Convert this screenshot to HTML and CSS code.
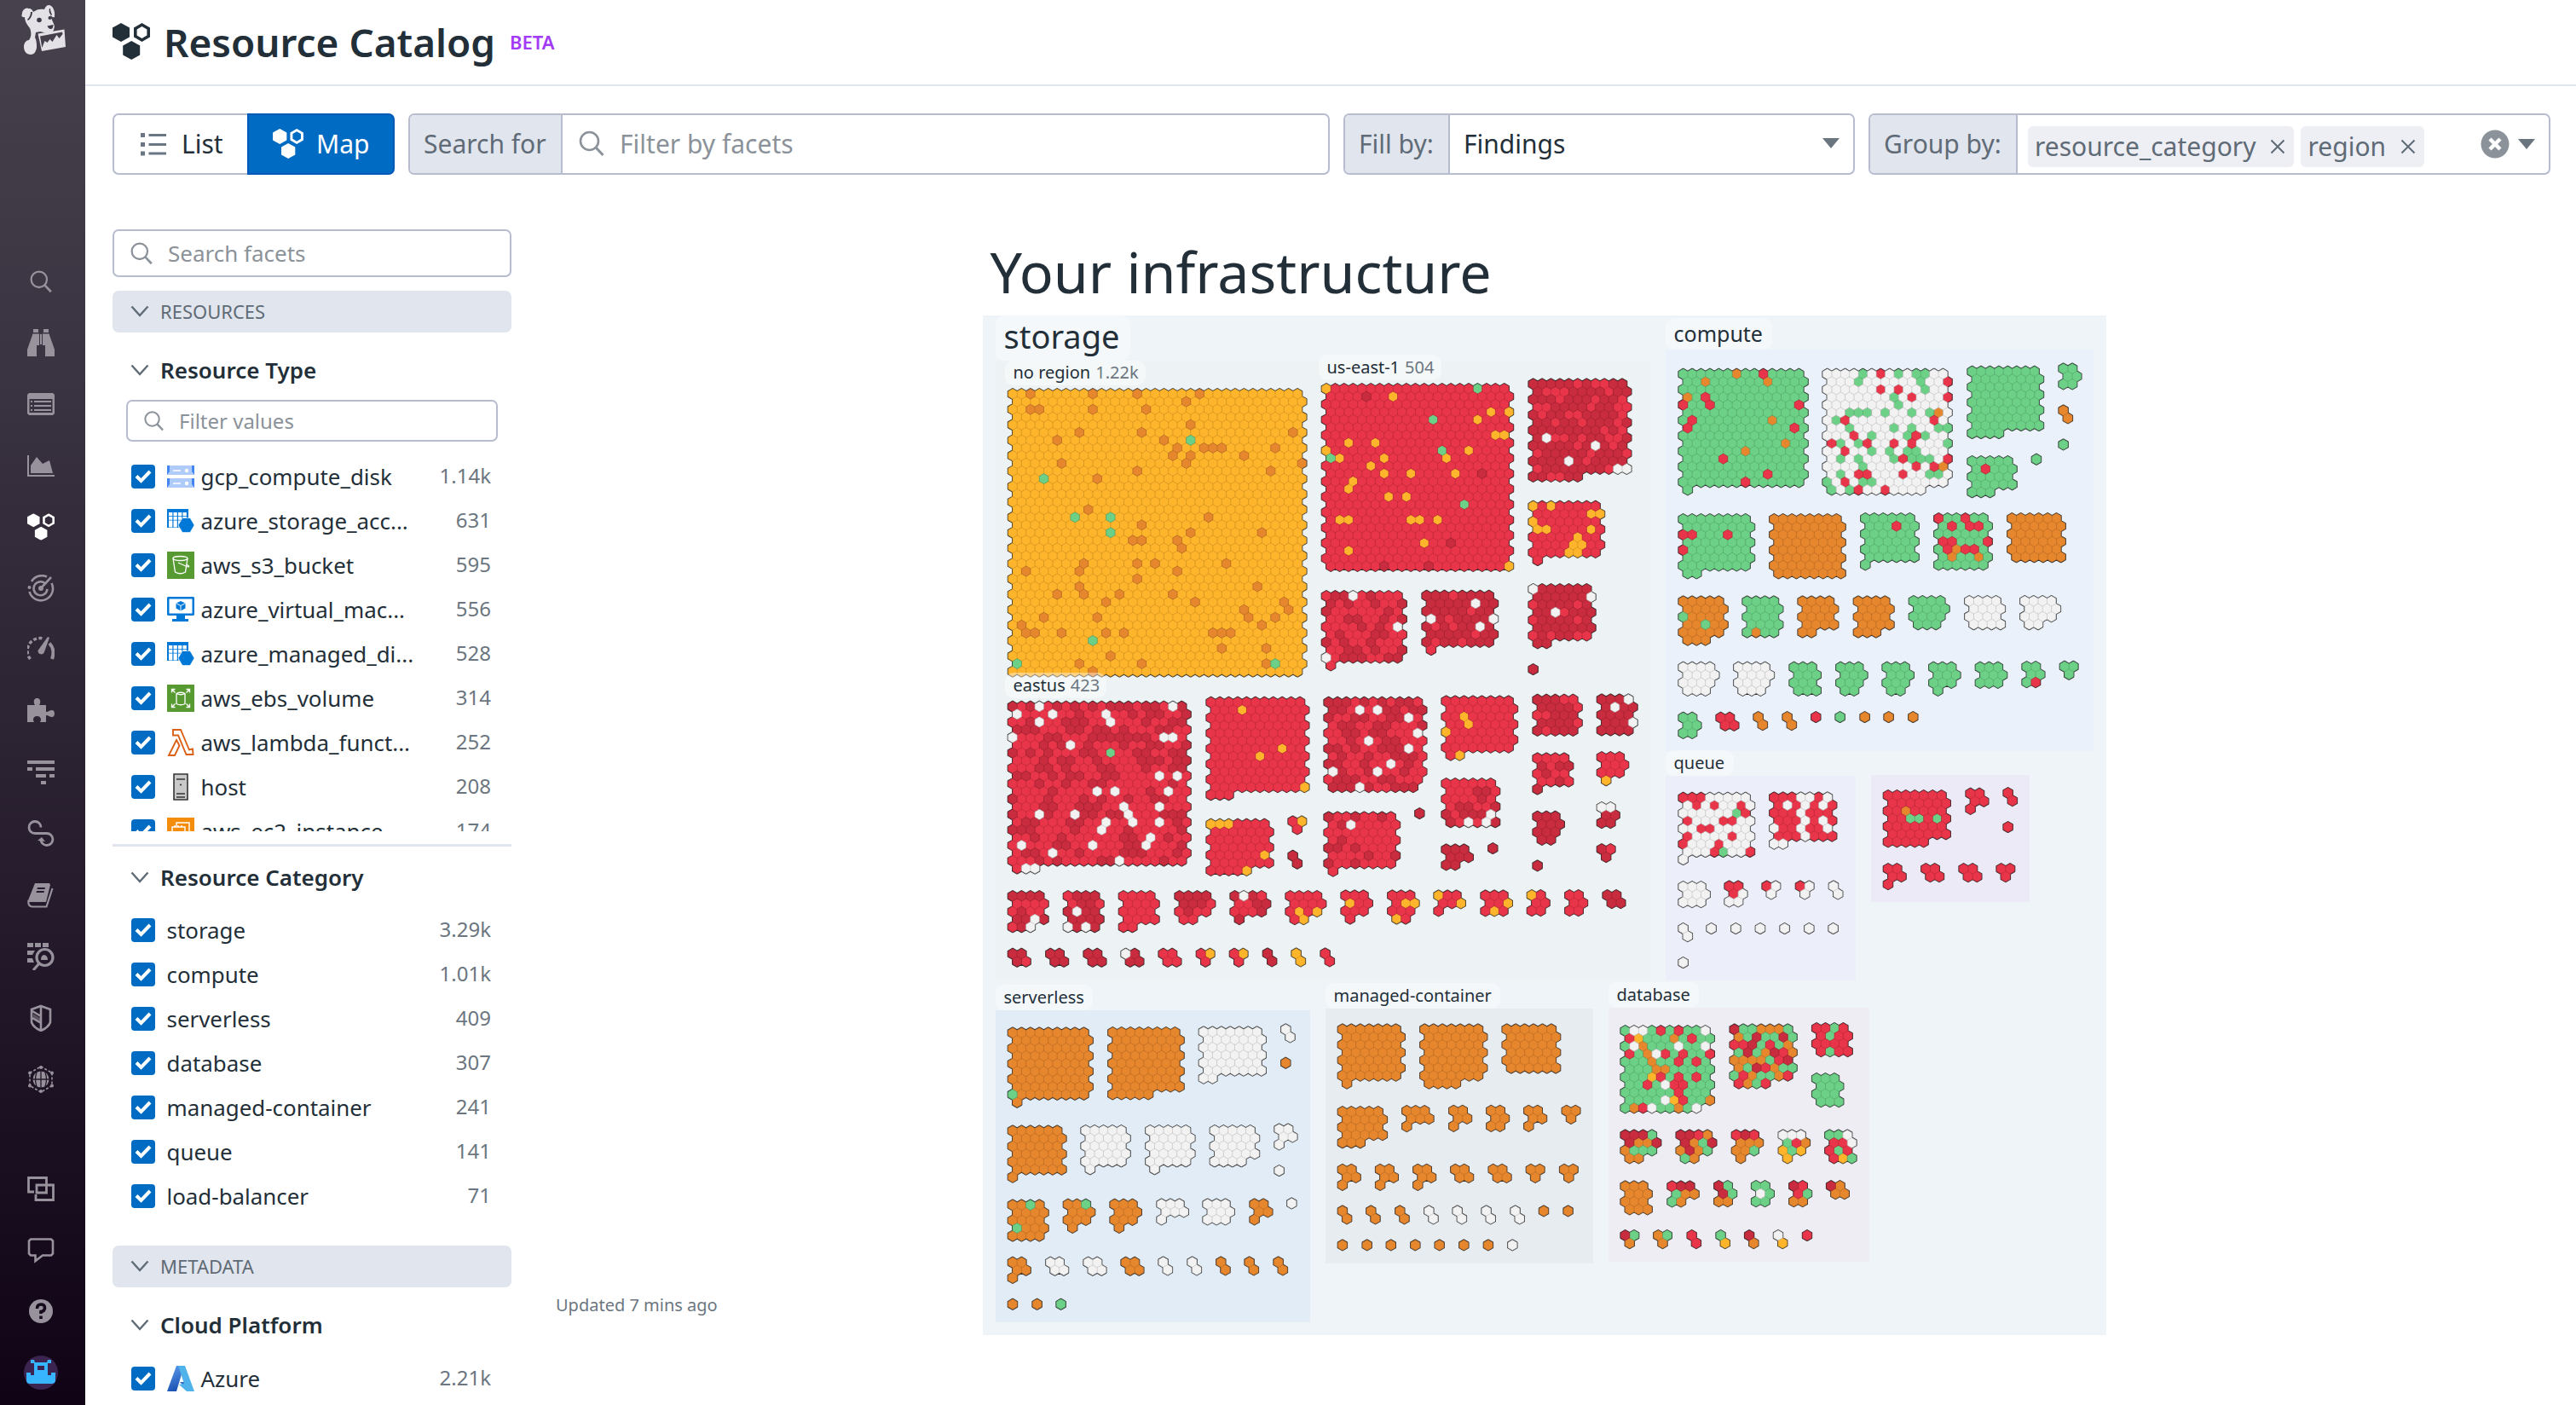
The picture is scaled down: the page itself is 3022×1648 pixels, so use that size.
FILE: index.html
```html
<!DOCTYPE html>
<html lang="en">
<head>
<meta charset="utf-8">
<title>Resource Catalog</title>
<link rel="stylesheet" href="styles.css">
</head>
<body>
<svg class="sprite" aria-hidden="true">
  <symbol id="i-hexes" viewBox="0 0 44 43">
    <path d="M10 0l10 5.5v11L10 22 0 16.500v-11zM22.200 21l10 5.500v11l-10 5.500-10-5.500v-11z"/>
    <path fill-rule="evenodd" d="M34.500 0L44 5.500v11L34.500 22 25 16.500v-11zM34.500 4l-5.900 3.500v7l5.900 3.500 5.900-3.500v-7z"/>
  </symbol>
  <symbol id="i-search" viewBox="0 0 32 32"><g fill="none" stroke="currentColor" stroke-width="2.600"><circle cx="13.500" cy="13.500" r="10.500"/><path d="M21 21l8.500 9" stroke-width="3"/></g></symbol>
  <symbol id="i-chevron" viewBox="0 0 22 14"><path d="M1.500 1.500L11 12 20.500 1.500" fill="none" stroke="currentColor" stroke-width="2.400"/></symbol>
  <symbol id="i-x" viewBox="0 0 18 18"><path d="M1.500 1.500l15 15M16.500 1.500l-15 15" fill="none" stroke="currentColor" stroke-width="2"/></symbol>
  <symbol id="i-check" viewBox="0 0 20 16"><path d="M2 7.500l5.500 5.500L18 2" fill="none" stroke="#fff" stroke-width="4"/></symbol>
  <symbol id="i-azuretable" viewBox="0 0 32 32">
    <path fill="#0078d7" d="M0 2h25v22H0z"/><path stroke="#fff" stroke-width="4" stroke-dasharray="4.300 1.200" d="M2 8h21M2 12.800h21M2 17.600h21M2 21.500h12"/>
    <path fill="#0078d7" stroke="#fff" stroke-width=".6" d="M18 12.500h9l5 8.500-5 8.500h-9L13 21z"/>
  </symbol>
</svg>

<nav class="rail">
  <svg class="rail-logo" viewBox="0 0 52 58">
    <path fill="#e3e1e6" d="M1 12C0 6 5 2 9 4c3 0 4 2 5 4 4-3 8-4 13-3 1-3 3-5 5-5 5 0 8 7 7 14-2 1-4-1-5-3 1 6 4 9 5 14l-1 4c-1 3-4 5-7 4-3-1-6-1-9-2l-5 1-1 6c2 3 2 8 2 12-1 5-3 8-7 8-5 0-8-4-8-9s3-8 6-8c3-4 3-9 1-14-3-4-6-8-6-13-2 1-4-1-4-3z"/>
    <path fill="#e3e1e6" fill-rule="evenodd" d="M19.500 33.500l31-5 1.500 20.500-28 5zM22 36.500l2.300 13.500 3.200-8 3 2 3-4 3 3 5-8 3 4 4-5-.5-2.500z"/>
    <path fill="#3f3846" d="M13 8c0 4-2 8-5 10l-1-1c3-3 4-6 4-9zM33 4c-1 3 0 6 2 8l1-1c-1-2-2-4-2-7z"/>
    <circle cx="21" cy="17.500" r="2.800" fill="#3f3846"/><circle cx="33.500" cy="15" r="2" fill="#3f3846"/>
    <path fill="#3f3846" d="M30.500 24.500l7-1.500c0 3-1 5-3 5s-3-1.500-4-3.500z"/>
  </svg>
  <div class="rail-main">
    <span><svg viewBox="0 0 32 32"><use href="#i-search" x="2" y="2" width="28" height="28"/></svg></span>
    <span><svg viewBox="0 0 32 32"><path d="M7 0h6v4H7zM19 0h6v4h-6zM6.500 5.500H14V19h-3v13H0V24zM18 5.500h7.500L32 24v8H21V19h-3zM15 6h2v12h-2z"/></svg></span>
    <span><svg viewBox="0 0 32 32"><path fill-rule="evenodd" d="M2 3h28l2 2v22l-2 2H2l-2-2V5zM2.500 10v16h27V10zM4 12h2v2H4zm4 0h20v2H8zm-4 5h2v2H4zm4 0h20v2H8zm-4 5h2v2H4zm4 0h20v2H8z"/></svg></span>
    <span><svg viewBox="0 0 32 32"><path d="M0 4h2v23h30v2H0zM4 25V16L11 6l7 8 8-4 4 15z"/></svg></span>
    <span class="on"><svg viewBox="0 0 44 43"><use href="#i-hexes"/></svg></span>
    <span><svg viewBox="0 0 32 32"><g fill="none" stroke="currentColor" stroke-width="2.600"><path d="M5 8a14 14 0 0 1 18-5.500M28.500 10A14 14 0 1 1 2.500 20M22 11.500A8 8 0 1 0 23.500 17M15 17L28 3" /></g><circle cx="2.500" cy="15" r="2"/><circle cx="16" cy="16" r="3"/></svg></span>
    <span><svg viewBox="0 0 32 32"><path d="M3.500 27A15 15 0 0 1 19 3" fill="none" stroke="currentColor" stroke-width="3.400" stroke-dasharray="4 2.400"/><path d="M26 8.500Q33 16 29 27" fill="none" stroke="currentColor" stroke-width="4"/><path d="M24 1l2 1-6.500 18a4 4 0 0 1-7-3z"/></svg></span>
    <span><svg viewBox="0 0 32 32"><path d="M0 9h9c-2-3-2-8 2.500-8S16 6 14 9h8v8c3 0 4-2 7-2 4 0 4 8 0 8-3 0-4-2-7-2v8h-7c2-3 1-7-3.500-7S6 26 8 29H0z"/></svg></span>
    <span><svg viewBox="0 0 32 32"><path d="M0 2h32v4H0zM0 10h6v4H0zM10 10h22v4H10zM10 18h12v4H10zM26 18h6v4h-6zM16 26h6v4h-6z"/></svg></span>
    <span><svg viewBox="0 0 32 32"><g fill="none" stroke="currentColor" stroke-width="2.800"><path d="M16 8.500A7 7 0 1 0 9 15.500h14a7 7 0 1 1-7 8"/></g><path d="M12 24l5-4 4 5z"/></svg></span>
    <span><svg viewBox="0 0 32 32"><path fill-rule="evenodd" d="M9 2h17l1 2-5 20H2L1 22zM12 7l-.5 2h9l.5-2zm-1 4l-.5 2h9l.5-2z"/><path fill="none" stroke="currentColor" stroke-width="2.200" d="M1.500 22q-1 7 4 7.500h17L29.500 8"/></svg></span>
    <span><svg viewBox="0 0 32 32"><path d="M0 0h7v5H0zM9 0h7v5H9zM18 0h7v5h-7zM0 9h9l-3 5H0zM0 18h6l2 5H0z"/><g fill="none" stroke="currentColor" stroke-width="3.200"><circle cx="20.500" cy="17" r="9.500"/><path d="M14 24l-7 8"/></g><path d="M16 20q0-6 4-6 4 1 4 6z"/></svg></span>
    <span><svg viewBox="0 0 32 32"><path fill="none" stroke="currentColor" stroke-width="2.600" d="M16 2l11 4v15q-2 6-11 10Q7 27 5 21V6zM16 2v28M6 8l10 6M6 16l10 6"/><path d="M7 11l8 5v5l-8-6z" opacity=".5"/></svg></span>
    <span><svg viewBox="0 0 32 32"><circle cx="16" cy="16" r="9.500"/><path fill="none" stroke="#241a2b" stroke-width="1.300" d="M16 6v20M6 16h20M11 8q-3 8 0 16M21 8q3 8 0 16"/><path fill="none" stroke="currentColor" stroke-width="1.600" stroke-dasharray="3 2" d="M16 1l13 7.500v15L16 31 3 23.500v-15z"/><g><circle cx="16" cy="2" r="2"/><circle cx="29" cy="8.500" r="2"/><circle cx="3" cy="8.500" r="2"/><circle cx="29" cy="23.500" r="2"/><circle cx="3" cy="23.500" r="2"/><circle cx="16" cy="30" r="2"/></g></svg></span>
  </div>
  <div class="rail-foot">
    <span><svg viewBox="0 0 32 32"><g fill="none" stroke="currentColor" stroke-width="2.800"><path d="M8 20H1.500V3.500h21V21H11V12h16"/><path d="M10 23v6.500h20.500V12H26"/></g></svg></span>
    <span><svg viewBox="0 0 32 32"><path fill="none" stroke="currentColor" stroke-width="2.600" d="M4 3.500h24l2 2v15l-2 2H18L9.500 29v-6.500H4l-2-2v-15z"/></svg></span>
    <span><svg viewBox="0 0 32 32"><circle cx="16" cy="16" r="14"/><path fill="none" stroke="#160a1c" stroke-width="3.600" d="M11.500 13q0-5 4.500-5t4.500 4-4.500 4.500V19M16 21.500V25"/></svg></span>
    <span><svg class="avatar" viewBox="0 0 40 40"><circle cx="20" cy="20" r="20" fill="#3b2550"/><path fill="#37b6ff" fill-rule="evenodd" d="M8 5h4l1 3h14l1-3h4v4h-4v14h4v-3h5v10q-1 3-4 3H7q-4 0-4-4v-9h5v3h4V9H8zM16 12v5h8v-5z"/></svg></span>
  </div>
</nav>

<main class="page">
  <header class="head">
    <svg class="head-icon" viewBox="0 0 44 43"><use href="#i-hexes"/></svg>
    <h1>Resource Catalog</h1>
    <span class="beta">BETA</span>
  </header>

  <section class="toolbar">
    <div class="switch">
      <div class="switch-item list">
        <svg width="30" height="28" viewBox="0 0 30 28"><path fill="#6b7684" d="M0 1h5v5H0zM9.500 2H30v3H9.500zM0 12h5v5H0zM9.500 13H30v3H9.500zM0 22.500h5v5H0zM9.500 23.500H30v3H9.500z"/></svg>List
      </div>
      <div class="switch-item map"><svg width="36" height="35" viewBox="0 0 44 43"><use href="#i-hexes"/></svg>Map</div>
    </div>
    <div class="field search-for">
      <span class="field-label">Search for</span>
      <div class="field-body ghost"><svg width="32" height="32"><use href="#i-search"/></svg>Filter by facets</div>
    </div>
    <div class="field fill-by">
      <span class="field-label">Fill by:</span>
      <div class="field-body dark">Findings<i class="caret"></i></div>
    </div>
    <div class="field group-by">
      <span class="field-label">Group by:</span>
      <div class="field-body tags">
        <span class="tag">resource_category<svg width="18" height="18"><use href="#i-x"/></svg></span>
        <span class="tag">region<svg width="18" height="18"><use href="#i-x"/></svg></span>
        <svg class="clear" width="34" height="34" viewBox="0 0 34 34"><circle cx="17" cy="17" r="16.500" fill="#8b9299"/><path d="M11 11l12 12M23 11L11 23" stroke="#fff" stroke-width="4.500"/></svg>
        <i class="caret"></i>
      </div>
    </div>
  </section>

  <section class="body">
    <aside class="facets">
      <div class="input big"><svg width="28" height="28"><use href="#i-search"/></svg>Search facets</div>
      <div class="band first"><svg width="22" height="14"><use href="#i-chevron"/></svg>RESOURCES</div>

      <h2 class="type"><svg width="22" height="14"><use href="#i-chevron"/></svg>Resource Type</h2>
      <div class="input small"><svg width="25" height="25"><use href="#i-search"/></svg>Filter values</div>
      <ul class="rows clipped">
        <li><b><svg><use href="#i-check"/></svg></b><svg class="ico" viewBox="0 0 32 32"><path fill="#aecbfa" d="M0 3h32v11H0zM0 18h32v11H0z"/><path fill="#4285f4" d="M0 3v11l3-4V3zM32 3v11l-3-4V3zM0 18v11l3-4v-7zM32 18v11l-3-4v-7z"/><path stroke="#fff" stroke-width="1.600" d="M7 9h9M7 24h9"/><circle cx="23" cy="9" r="2.200" fill="#fff"/><circle cx="23" cy="24" r="2.200" fill="#fff"/></svg><span>gcp_compute_disk</span><em>1.14k</em></li>
        <li><b><svg><use href="#i-check"/></svg></b><svg class="ico"><use href="#i-azuretable"/></svg><span>azure_storage_acc...</span><em>631</em></li>
        <li><b><svg><use href="#i-check"/></svg></b><svg class="ico" viewBox="0 0 32 32"><path fill="#569a31" d="M0 0h32v32H0z"/><g fill="none" stroke="#fff" stroke-width="1.300"><ellipse cx="15.500" cy="8" rx="8.500" ry="2.500"/><path d="M7 8l2.500 16q6 3.500 12 0L24 8M13 13l10 4.500q3 1 2.500-.5l-2-1.500"/></g></svg><span>aws_s3_bucket</span><em>595</em></li>
        <li><b><svg><use href="#i-check"/></svg></b><svg class="ico" viewBox="0 0 32 32"><path fill="#0078d7" fill-rule="evenodd" d="M1 1h30l1 1v20l-1 1H21v4h4v3H6v-3h5v-4H1l-1-1V2zM2.500 3.500v17h27v-17z"/><path fill="#0078d7" d="M16 6l5.500 2.500v6L16 17.500l-5.500-3v-6z"/><path stroke="#fff" fill="none" d="M10.500 8.500L16 11.500l5.500-3M16 11.500v6"/></svg><span>azure_virtual_mac...</span><em>556</em></li>
        <li><b><svg><use href="#i-check"/></svg></b><svg class="ico"><use href="#i-azuretable"/></svg><span>azure_managed_di...</span><em>528</em></li>
        <li><b><svg><use href="#i-check"/></svg></b><svg class="ico" viewBox="0 0 32 32"><path fill="#569a31" d="M0 0h32v32H0z"/><g fill="none" stroke="#fff" stroke-width="1.300"><path d="M11 10.500q5-2.500 10 0v12q-5 2.500-10 0zM11 10.500q5 2.500 10 0M5.500 9.500V5.500h4M5.500 5.500l4 4M26.500 9.500V5.500h-4M26.500 5.500l-4 4M5.500 22.500v4h4M5.500 26.500l4-4M26.500 22.500v4h-4M26.500 26.500l-4-4"/></g></svg><span>aws_ebs_volume</span><em>314</em></li>
        <li><b><svg><use href="#i-check"/></svg></b><svg class="ico" viewBox="0 0 32 32"><path fill="none" stroke="#dc6014" stroke-width="1.900" d="M7 1h9l10 23.500 4-1 .5 6.500h-8L13 7.500H7zM11 13l3.500 6.500L9 31H2z"/></svg><span>aws_lambda_funct...</span><em>252</em></li>
        <li><b><svg><use href="#i-check"/></svg></b><svg class="ico" viewBox="0 0 32 32"><path fill="#c8c8c8" stroke="#333" stroke-width="1.600" d="M8 1h16v30H8z"/><path stroke="#333" stroke-width="1.300" d="M11 7h10M11 24h10M11 28h10"/><circle cx="16" cy="13.500" r="1.100" fill="#333"/></svg><span>host</span><em>208</em></li>
        <li><b><svg><use href="#i-check"/></svg></b><svg class="ico" viewBox="0 0 32 32"><path fill="#f58d0c" d="M0 0h32v32H0z"/><path fill="none" stroke="#fff" stroke-width="1.400" d="M11 10V6h15v14h-4M6 11h15v15H6zM9 11v-2M13 11v-2M17 11v-2"/></svg><span>aws_ec2_instance</span><em>174</em></li>
      </ul>

      <h2 class="category"><svg width="22" height="14"><use href="#i-chevron"/></svg>Resource Category</h2>
      <ul class="rows">
        <li><b><svg><use href="#i-check"/></svg></b><span>storage</span><em>3.29k</em></li>
        <li><b><svg><use href="#i-check"/></svg></b><span>compute</span><em>1.01k</em></li>
        <li><b><svg><use href="#i-check"/></svg></b><span>serverless</span><em>409</em></li>
        <li><b><svg><use href="#i-check"/></svg></b><span>database</span><em>307</em></li>
        <li><b><svg><use href="#i-check"/></svg></b><span>managed-container</span><em>241</em></li>
        <li><b><svg><use href="#i-check"/></svg></b><span>queue</span><em>141</em></li>
        <li><b><svg><use href="#i-check"/></svg></b><span>load-balancer</span><em>71</em></li>
      </ul>

      <div class="band second"><svg width="22" height="14"><use href="#i-chevron"/></svg>METADATA</div>
      <h2 class="cloud"><svg width="22" height="14"><use href="#i-chevron"/></svg>Cloud Platform</h2>
      <ul class="rows platforms">
        <li><b><svg><use href="#i-check"/></svg></b><svg class="ico" viewBox="0 0 32 32"><defs><linearGradient id="az" x1="0" y1="0" x2=".3" y2="1"><stop offset="0" stop-color="#5ea0ef"/><stop offset="1" stop-color="#1d55b5"/></linearGradient></defs><path fill="url(#az)" d="M11 1h9L11 31H0z"/><path fill="#2f6fcb" d="M15 20h10l-2 9z"/><path fill="#4fb2ea" d="M13 1h8l11 30h-9l-9-8 6-1z"/></svg><span>Azure</span><em>2.21k</em></li>
      </ul>
    </aside>

    <div class="stage">
      <div class="infra">
        <h3>Your infrastructure</h3>
        <div class="canvas">
          <svg id="map" width="1318" height="1196" viewBox="1153 370 1318 1196"></svg>
          <div id="labels"></div>
        </div>
      </div>
      <p class="updated">Updated 7 mins ago</p>
    </div>
  </section>
</main>
<script src="map.js"></script>
</body>
</html>
```
FILE: styles.css
```css
* { box-sizing: border-box; }
body {
  margin: 0;
  width: 3022px;
  height: 1648px;
  overflow: hidden;
  display: flex;
  background: #fff;
  color: #232f38;
  font-family: "Noto Sans", "Open Sans", sans-serif;
  font-size: 26px;
}
h1, h2, h3, p, ul { margin: 0; padding: 0; font-weight: 400; }
svg { display: block; flex: none; }
.sprite { position: absolute; width: 0; height: 0; }

/* navigation rail */
.rail {
  width: 100px;
  height: 1648px;
  flex: none;
  display: flex;
  flex-direction: column;
  background: linear-gradient(#47414d 0%, #3a3341 26%, #251b2c 64%, #0f0315 100%);
  color: #98929c;
  fill: currentColor;
}
.rail-logo { width: 52px; height: 58px; margin: 6px 0 0 25px; }
.rail-main { margin-top: 230px; }
.rail-foot { margin-top: 56px; }
.rail span { display: flex; height: 72px; width: 96px; align-items: center; justify-content: center; }
.rail span svg { width: 32px; height: 32px; }
.rail .on { color: #fff; }
.rail span .avatar { width: 40px; height: 40px; }

/* header */
.page { flex: 1; display: flex; flex-direction: column; padding: 0; }
.head {
  height: 101px;
  flex: none;
  display: flex;
  align-items: center;
  padding: 0 0 2px 32px;
  border-bottom: 2px solid #e1e5ef;
}
.head-icon { width: 44px; height: 43px; fill: #232f38; }
.head h1 { margin-left: 16px; font-size: 45.900px; font-weight: 600; line-height: 60px; white-space: nowrap; }
.beta { margin-left: 17px; font-size: 22px; font-weight: 600; color: #a33af5; }

/* toolbar */
.toolbar { display: flex; gap: 16px; height: 72px; margin: 32px 30px 0 32px; font-size: 30px; flex: none; }
.switch { display: flex; width: 331px; }
.switch-item { display: flex; align-items: center; padding-bottom: 1px; border: 2px solid #b7bccf; }
.switch-item.list { width: 158px; padding-left: 31px; gap: 18px; border-right: 0; border-radius: 7px 0 0 7px; }
.switch-item.map { flex: 1; padding-left: 28px; gap: 15px; border-color: #0059b8; border-radius: 0 7px 7px 0; background: #006bc2; color: #fff; fill: #fff; }
.field { display: flex; border: 2px solid #b7bccf; border-radius: 7px; overflow: hidden; color: #5f6b76; }
.field-label { display: flex; flex: none; align-items: center; padding: 0 16px 1px; background: #e1e5ed; border-right: 2px solid #b7bccf; white-space: nowrap; }
.field-body { flex: 1; display: flex; align-items: center; padding-bottom: 2px; }
.search-for { width: 1081px; }
.search-for .field-label { width: 179px; }
.fill-by .field-label { width: 123px; }
.group-by .field-label { width: 173px; }
.ghost { padding-left: 18px; gap: 17px; color: #8b9299; }
.fill-by { width: 600px; }
.group-by { flex: 1; }
.dark { padding: 0 16px 2px; color: #232f38; justify-content: space-between; }
.caret { width: 0; height: 0; border: 10.500px solid transparent; border-top: 12px solid #6b7580; border-bottom: 0; }
.tags { padding: 5px 16px 0 12px; gap: 8px; }
.tag { display: flex; align-items: center; height: 48px; padding: 0 10px 0 8px; gap: 17px; border-radius: 6px; background: #eeeff5; }
.clear { margin: -6px 2px 0 auto; }
.tags .caret { margin-top: -6px; }

/* facets */
.body { display: flex; flex: 1; min-height: 0; padding-left: 32px; }
.facets { width: 468px; flex: none; padding-top: 64px; }
.input { display: flex; align-items: center; border: 2px solid #b7bccf; border-radius: 7px; color: #8b9299; }
.big { height: 56px; padding-left: 18px; gap: 17px; }
.small { width: 436px; height: 49px; margin: 10px 0 0 16px; padding-left: 18px; gap: 17px; font-size: 24px; }
.band { display: flex; align-items: center; height: 49px; padding: 0 0 1px 21px; gap: 13px; border-radius: 7px; background: #e1e5ed; color: #5f6b76; font-size: 22px; }
.first { margin-top: 16px; }
.second { margin-top: 32px; }
.facets h2 { display: flex; align-items: center; height: 50px; padding-left: 21px; gap: 13px; font-size: 26px; font-weight: 600; }
.facets h2 svg { color: #5f6b76; }
.facets h2.type { margin-top: 19px; }
.facets h2.category { margin-top: 15px; border-top: 3px solid #e1e5ed; height: 75px; }
.facets h2.cloud { margin-top: 19px; }
.rows { list-style: none; }
.clipped { height: 442px; margin: 15px 0 3px; overflow: hidden; }
.rows li { display: flex; align-items: center; height: 52px; padding: 0 24px 0 21.500px; }
.rows b { display: flex; align-items: center; justify-content: center; width: 28.500px; height: 28px; border-radius: 4px; background: #006bc2; flex: none; }
.rows b svg { width: 20px; height: 16px; }
.rows .ico { width: 32px; height: 32px; margin-left: 13.500px; }
.rows .ico + span { margin-left: 8px; }
.rows b + span { margin-left: 13.500px; }
.rows span { line-height: 40px; font-size: 25.900px; }
.rows em { margin: -4px 0 0 auto; font-style: normal; font-size: 24px; color: #6b7680; }
.platforms { padding-top: 12px; }

/* map */
.stage { position: relative; flex: 1; display: flex; justify-content: center; }
.infra { width: 1318px; padding-top: 68px; margin-left: 1px; }
.infra h3 { height: 97px; padding-left: 9px; font-size: 66.300px; line-height: 90px; white-space: nowrap; }
.canvas { position: relative; width: 1318px; height: 1196px; }
.map-label {
  position: absolute;
  display: flex;
  align-items: center;
  padding: 0 10px;
  border-radius: 10px;
  background: rgba(255, 255, 255, .4);
  white-space: nowrap;
  line-height: 1;
}
.map-label i { margin-left: 6px; font-style: normal; color: #6b7680; }
.map-label.main { padding-bottom: 5px; }
.updated { position: absolute; left: 52px; bottom: 103px; font-size: 20px; line-height: 28px; color: #6b7680; }
```
FILE: map.js
```javascript
// Hexagon geometry: flat sides left and right, odd rows shifted by half a cell.
const W = 10.44, ROW = 9.04, R = 6.03;
const COLORS = { r: '#e93549', d: '#c82c3e', o: '#e6872e', y: '#ffb52b', g: '#6cd187', w: '#f2f2f2' };

const PANELS = [
  [1153, 370, 1318, 1196, '#eff4f9'],
  [1168.3, 423.5, 768, 725.5, '#edf3f4'],
  [1954, 410, 502, 471, '#eaf1fb'],
  [1954, 910, 223, 240, '#eceff9'],
  [2195, 909, 186, 149, '#ebeaf6'],
  [1168, 1185, 369, 365.700, '#e1ecf6'],
  [1555, 1183, 314, 299, '#e7ecf1'],
  [1887, 1182, 306, 298, '#ededf3']
];

// x, y, width, height, font size, name, count
const LABELS = [
  [1168, 370, 158, 53, 38, 'storage'],
  [1179, 422.5, 165, 29, 20, 'no region', '1.22k'],
  [1547, 416, 144, 29.500, 20, 'us-east-1', '504'],
  [1179, 789, 119, 29.500, 20, 'eastus', '423'],
  [1954, 373, 125, 37, 25, 'compute'],
  [1954, 880, 80, 30, 20, 'queue'],
  [1168, 1155, 114, 30, 20, 'serverless'],
  [1555, 1153, 205, 30, 20, 'managed-container'],
  [1887, 1152, 106, 30, 20, 'database']
];

// A cluster is [x, y, "row/row/row"] or [x, y, columns, count, fill, marks];
// marks read "row, colour, columns": "6o5,17g20" is row 6, orange at 5 and 17, green at 20.
const GROUPS = [
  { at: [0, 0], unit: 1, items: [
    [1181.7, 455, 33, 1221, 'y',
      '0o2,9,14,21;1o19;2o2,3,9,15;4o20;5o7,14,31;6o5,17g20;7o18,21,22,23,29;8o18,20,26;9o5,19,32;10o14,29;11g3o9;15o8;16g7,11o22;17o14;18g11o20,28;19o13,14,18;20o19;22o8,14,16,24;23o1,7,18;24o14;25o7,27;26o5,8,12,18;27o10,20,30;28o26,31;29o3,9,26,29;30o1,28;31o1,2,5,10,12,22,23,24;32g9;33o23,28;34o11;35g0,29o7,14,28;36o9']
  ] },
  { at: [1540, 400], unit: 1 / 3, items: [
    [29, 147, 21, 504, 'r', '0y0g17;1d4y7;3y18,20;4g12y17;6y19,20;7y2,5;8y0,16g13;9g0y1,6,13;10y5;11y6,9,14d17;12y3;13y2;14y7,9;15g15;17y1,2,9,10,12;20y11d14;21y2;23d6,11y20'],
    [757, 130, 11, 138, 'd', '0r5,7,8;1r1,2,3,8;2r3,7,10;3r0,1,6,9,10;4r1,4,5,10;5r2,5,9;6r8,10;7w1r2,3,5,8,9;8w7r5,9;9r0,6,10;10w4r6;11r0,8w9,10;12r2,3'],
    [757, 560, 8, 57, 'r', '0y0,2;1y6,7;2y0;3y0,1,6;4y5;5y4,5;6y4,5'],
    [29, 876, 'rddwrdrrr/drdrrdrrd/drrrrrrdr/rrddrrdrd/rrrrdrdrw/rdrrrddrr/drdrrdrrr/rrddrdrrd/wrdddrrdd/r'],
    [382, 875, 8, 57, 'd', '0r3;1w5;2r5;3w0,7r2;4r1,3w6;5r5;6r1,4;7r0'],
    [757, 852, 7, 51, 'd', '0w0;1w6;2r0,5;3w2r3;4r0,5;6r0,2,5,6'],
    [757, 1134, 'd']
  ] },
  { at: [1150, 790], unit: 1 / 3, items: [
    [95, 95, 'drdwrdrdrdrdddrddrwd/wrrrwrrdrrwrrdrddrrd/rrdwrrdddrrwrrrdrrdd/dddrrrddrddrdrrrddrr/wrrrddrrrdddddddrwwr/rrrdrdwrdrrrdrrddrrd/drdrdrrrddrgrrddrrdd/rrrdrddrrdrrrrdddrdd/rrrddrdrrrddrrrdrrdd/ddrrdrddrrddrrrrwrwr/rrrdrrdrrddrrrrrrrdr/rrrrdrrrrwrwrrrdrwrr/drrrdrrrdrdrrdrrddrr/rrrddrrdddrrwrrrwrrr/drrwdrrwddrddwrrrddd/rddrrrddrrwrrwrrwrdr/dddrrrrdrrwrrdrrrrrd/rrdrrdrrrrrrddrwrdrr/rwrrrddrrwrrrddwrrrd/rddrwrrdrrrrdddrrrdr/rrrdrdrrrrddwrrrrdrr/rww'],
    [793, 80, 11, 135, 'r', '1y3;6y8;7y5;11y10'],
    [793, 509, 7, 47, 'r', '0y0,1,2;4y6;6y4'],
    [1081, 499, 'ry/r'], [1081, 620, 'd/d'],
    [95, 762, 'dddd/rrrr/rdrr/ddwd/rdw'], [290, 762, 'rddd/rddr/dwdd/dddd/wdwd'],
    [485, 762, 4, 18, 'r'], [682, 762, 'dddd/dddr/rdrr/rr'], [877, 762, 'dwdr/rrdd/rrrd/d'],
    [1072, 762, 'rrrr/rrrr/ryry/ry'],
    [95, 965, 'dd/dr'], [228, 965, 'dd/dd'], [361, 965, 'dd/dd'], [493, 965, 'wd/dd'], [625, 965, 'rr/rr'],
    [758, 965, 'ry/r'], [875, 965, 'ry/r'], [992, 964, 'd/d'], [1093, 964, 'y/y']
  ] },
  { at: [1530, 790], unit: 1 / 3, items: [
    [67, 80, 'dddrdrdrddr/ddrwrwddrdd/drrddrrddwr/rddrrddrrrd/rrddrddrrrw/rrdrwrddrrr/ddrdrrdddwr/rdrrdrrdddr/ddrrdrrwrdr/wdrrdwrrdrr/rdddrrddrrr/dddwdrrddd'],
    [67, 484, 8, 57, 'r', '0d0,3,6;1d1w2;3d1;4d0,1,3;5d4,7;6d0,3'],
    [387, 471, 'd'],
    [481, 76, 8, 58, 'r', '2y2;3y2;4y0;7y1'],
    [481, 366, 'rrrrrr/rrrddr/rrrrdr/rddrrd/drdddw/drwrwd'],
    [481, 598, 3, 8, 'd'], [645, 594, 'd'],
    [802, 71, 'dddrr/ddddr/rrddd/ddddr/drddd'], [802, 277, 'rrrr/drdd/rdrr/rrdr/d'],
    [802, 482, 3, 11, 'd'], [802, 655, 'd'],
    [1028, 70, 'dddw/dwdd/dddd/dddw/dddd'], [1028, 273, 'rrr/rrr/rrr/y'], [1028, 450, 'ww/dd/dd'], [1028, 597, 'dr/d'],
    [127, 760, 'rrr/yrr/rrr/r'], [291, 760, 'rrr/ryy/rrr/yr'], [454, 760, 'yrr/rry/r'], [619, 760, 'rrr/rry/ryr'],
    [782, 759, 'yr/rr/rr'], [915, 759, 'rr/rr/rr'], [1048, 759, 'dd/dd'], [55, 964, 'r/r']
  ] },
  { at: [1950, 370], unit: 1 / 3, items: [
    [55, 185, 14, 211, 'g', '0o6r9;1o2,9;3o0r2;4r0,3,13;6r1o10;7r0,12;9o11;10o7;11r4;13r9;14r7'],
    [562, 185, 14, 221, 'w', '0g4,8,10,11r6;1g3,10r13;2r6,8g11;3g7r9,13;4g8;5g2,3,4,6,9,11o12;6g1r2,12;7g2,7,9,12,13;8r3,10g5,9,11;9r0,4,7,9g1,3,13;10r2g5,7,9,10;11g1,3,7,9,10,11r8,13;12g4r10,12o13;13g1,11,12r3,4,8;14g0,4,5r2;15g0,2r3,6'],
    [1072, 176, 8, 68, 'g'], [1393, 166, 'gg/gg/gg'], [1393, 313, 'o/o'], [1393, 433, 'g'], [1298, 485, 'g'],
    [1072, 492, 5, 23, 'g', '1r1'],
    [55, 696, 8, 58, 'g', '2r0,1,5;4r0'], [375, 696, 8, 64, 'o'], [696, 693, 6, 37, 'g', '1r3'],
    [954, 693, 6, 42, 'g', '0r0,3;1r1,3,4;3r0,1,5;4r1,3,4o2;5o1,4'], [1212, 693, 6, 36, 'o'],
    [55, 985, 5, 28, 'o', '2g0;3g2'], [280, 985, 4, 20, 'g', '4o1'], [475, 985, 4, 18, 'o'], [671, 985, 4, 19, 'o'],
    [866, 984, 4, 15, 'g'], [1062, 984, 4, 16, 'w'], [1257, 984, 4, 14, 'w'],
    [55, 1217, 4, 15, 'w'], [249, 1217, 4, 15, 'w'], [445, 1217, 3, 12, 'g'], [609, 1217, 3, 11, 'g'], [772, 1217, 3, 11, 'g'],
    [936, 1217, 3, 10, 'g'], [1100, 1217, 3, 9, 'g'], [1264, 1215, 'gg/gg/gr'], [1397, 1214, 'gg/g'],
    [55, 1394, 'gg/gg/gg'], [187, 1394, 'rr/rr'], [319, 1392, 'o/o'], [421, 1392, 'o/o'],
    [522, 1392, 'r'], [607, 1392, 'g'], [694, 1392, 'o'], [778, 1392, 'o'], [864, 1392, 'o']
  ] },
  { at: [1950, 870], unit: 1 / 3, items: [
    [55, 176, 'rrrwwwww/wrwrwwrw/wwwwwwgr/rwwwrrww/wwrrwwww/rwwwwrww/rwwwrwww/wwwrgwwr/w'],
    [375, 175, 'rrrwwrw/rwrwrwr/rrrwrrr/rrrwrwr/wrrwrrw/rrrwrrr/ww'],
    [55, 489, 3, 9, 'w'], [217, 487, 'rr/rw/ww'], [349, 487, 'rw/w'], [467, 487, 'rw/w'], [584, 487, 'w/w'],
    [55, 636, 'w/w'], [154, 636, 'w'], [240, 636, 'w'], [326, 636, 'w'], [412, 636, 'w'], [498, 636, 'w'], [583, 636, 'w'],
    [55, 756, 'w'],
    [776, 168, 7, 47, 'r', '2o2;3g2,3,5'], [1066, 161, 'rr/rr/r'], [1198, 159, 'r/r'], [1198, 279, 'r'],
    [776, 426, 'rr/rr/r'], [909, 426, 'rr/rr'], [1042, 426, 'rr/rr'], [1174, 426, 'rr/r']
  ] },
  { at: [1150, 1140], unit: 1 / 3, items: [
    [95, 193, 9, 82, 'o', '8g0'], [447, 192, 8, 69, 'o'], [767, 190, 7, 44, 'w'], [1056, 181, 'w/w'], [1056, 299, 'o'],
    [95, 538, 6, 37, 'o'], [352, 537, 5, 26, 'w'], [579, 537, 5, 26, 'w'], [806, 537, 5, 24, 'w'],
    [1033, 532, 'ww/ww/w'], [1033, 678, 'w'],
    [95, 799, 'oogo/oooo/oooo/gooo/oooo'], [290, 797, 'oog/ooo/ooo/o'], [454, 797, 3, 10, 'o'],
    [619, 796, 'www/www/w'], [781, 796, 3, 9, 'w'], [946, 796, 'oo/oo/o'], [1077, 793, 'w'],
    [95, 1001, 'oo/oo/o'], [228, 1001, 'ww/ww'], [361, 1001, 'ww/ww'], [493, 1001, 'oo/oo'],
    [625, 1000, 'w/w'], [727, 1000, 'w/w'], [828, 1000, 'o/o'], [928, 1000, 'o/o'], [1030, 1000, 'o/o'],
    [95, 1148, 'o'], [181, 1148, 'o'], [265, 1148, 'g']
  ] },
  { at: [0, 0], unit: 1, items: [
    [1568.6, 1200.3, 7, 50, 'o'], [1665, 1200.3, 7, 53, 'o'], [1761.4, 1200.3, 6, 36, 'o'],
    [1568.6, 1297, 5, 23, 'o'], [1644, 1296, 'ooo/ooo/o'], [1699, 1295.7, 'oo/oo/o'], [1743, 1295.7, 'oo/oo/oo'],
    [1787, 1295.7, 'oo/oo/o'], [1831.5, 1295.7, 'oo/o'],
    [1568.6, 1364.7, 'oo/oo/o'], [1612.8, 1364.7, 'oo/oo/o'], [1657, 1364.7, 'oo/oo/o'], [1701, 1364.7, 'oo/oo'],
    [1745.4, 1364.7, 'oo/oo'], [1789.6, 1364.7, 'oo/o'], [1828.8, 1364.7, 'oo/o'],
    [1568.6, 1413.3, 'o/o'], [1602, 1413.3, 'o/o'], [1636, 1413.3, 'o/o'], [1670, 1413.3, 'w/w'], [1703.4, 1413.3, 'w/w'],
    [1737.3, 1413.3, 'w/w'], [1771.3, 1413.3, 'w/w'], [1804.7, 1413.3, 'o'], [1833.3, 1413.3, 'o'],
    [1568.6, 1453.3, 'o'], [1597.4, 1453.3, 'o'], [1625.5, 1453.3, 'o'], [1654, 1453.3, 'o'], [1682.4, 1453.3, 'o'],
    [1711, 1453.3, 'o'], [1739.6, 1453.3, 'o'], [1768, 1453.3, 'w'],
    [1900.3, 1202, 'gwwgrgrggw/rygggogrgg/gwogggwggw/rgowrgrggr/gggoggrgrg/gggooggggg/gggyrgrgrg/ggrgwrrggg/ggggggrggg/ggggwyrggo/gorwggogw'],
    [2028.4, 1200.3, 'dggooog/ogdggdg/rrdgrgo/gdgodro/oooogrd/ogdrogg/groggor/rogr'],
    [2124.8, 1199, 'rrgr/rgrr/rrrr/rgrr'], [2124.8, 1258, 3, 12, 'g'],
    [1900.3, 1324.3, 'dddg/dood/oggg/oo'], [1965.4, 1324.3, 'ddro/dogd/odog/go'], [2030.6, 1324.3, 'rdr/ooo/oog/o'],
    [2085.5, 1324.3, 'www/gro/ygy/y'], [2140, 1324.3, 'ggw/rrw/rgr/ryg'],
    [1900.3, 1384.3, 3, 12, 'o'], [1955.2, 1384.3, 'rdd/goo/go'], [2010, 1384, 'dg/dg/oo'], [2053.8, 1384, 'gg/wg/gg'],
    [2098, 1384, 'dr/rg/oo'], [2141.8, 1384, 'do/oo'],
    [1900.3, 1442, 'dg/o'], [1939, 1442, 'og/o'], [1978.4, 1442, 'r/r'], [2012.3, 1442, 'g/y'],
    [2045.8, 1442, 'd/o'], [2079.7, 1442, 'w/y'], [2113.7, 1442, 'r']
  ] }
];

function expand(item) {
  if (typeof item[2] === 'string') return item[2].split('/').map(row => row.split(''));
  const [, , cols, count, fill, marks] = item;
  const rows = [];
  for (let left = count; left > 0; left -= cols) rows.push(Array(Math.min(cols, left)).fill(fill));
  (marks ? marks.split(';') : []).forEach(mark => {
    const row = parseInt(mark, 10);
    for (const [, color, list] of mark.matchAll(/([a-z])([\d,]+)/g)) {
      list.split(',').filter(Boolean).forEach(col => { rows[row][+col] = color; });
    }
  });
  return rows;
}

function hexagon(cx, cy) {
  const h = W / 2, q = R / 2;
  return 'M' + [[0, -R], [h, -q], [h, q], [0, R], [-h, q], [-h, -q]]
    .map(([dx, dy]) => (cx + dx).toFixed(1) + ' ' + (cy + dy).toFixed(1)).join('L') + 'Z';
}

let edges = '';
const fills = {};
for (const group of GROUPS) {
  for (const item of group.items) {
    const left = group.at[0] + item[0] * group.unit + 6.3;
    const top = group.at[1] + item[1] * group.unit + 7.1;
    expand(item).forEach((row, r) => row.forEach((color, c) => {
      const d = hexagon(left + c * W + (r % 2 ? W / 2 : 0), top + r * ROW);
      edges += d;
      fills[color] = (fills[color] || '') + d;
    }));
  }
}

document.getElementById('map').innerHTML =
  PANELS.map(([x, y, w, h, c]) => `<rect x="${x}" y="${y}" width="${w}" height="${h}" fill="${c}"/>`).join('') +
  `<path d="${edges}" fill="#333" stroke="#2d2d2d" stroke-width="2" stroke-linejoin="round"/>` +
  Object.entries(fills).map(([k, d]) => `<path d="${d}" fill="${COLORS[k]}" stroke="${COLORS[k]}" stroke-width=".5"/>`).join('') +
  Object.entries(fills).map(([k, d]) => `<path d="${d}" fill="none" stroke="#000" stroke-opacity=".1" stroke-width=".7"/>`).join('');

document.getElementById('labels').innerHTML = LABELS.map(([x, y, w, h, size, name, count]) =>
  `<div class="map-label${size > 30 ? ' main' : ''}" style="left:${x - 1153}px;top:${y - 370}px;width:${w}px;height:${h}px;font-size:${size}px">${name}${count ? `<i>${count}</i>` : ''}</div>`).join('');
```
